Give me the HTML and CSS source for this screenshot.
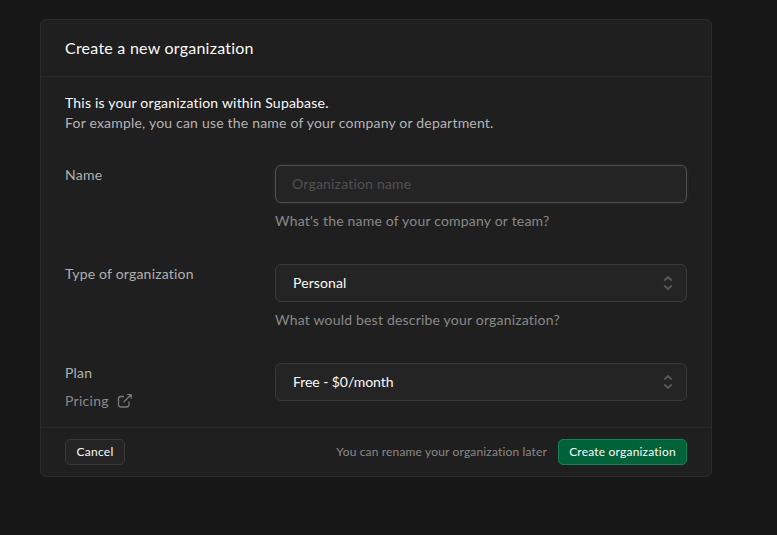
FILE: index.html
```html
<!DOCTYPE html>
<html lang="en"><head><meta charset="utf-8"><title>Create a new organization</title><link rel="stylesheet" href="styles.css"></head>
<body>
<main class="panel">
<header class="panel-header"><h1><span class="t t-title">Create a new organization</span></h1></header>
<section class="intro"><p class="lead"><span class="t t-lead">This is your organization within Supabase.</span></p><p class="sub"><span class="t t-sub">For example, you can use the name of your company or department.</span></p></section>
<section class="row"><div class="label"><span class="t t-name">Name</span></div><div class="field"><div class="control input"><span class="t t-ph">Organization name</span></div><p class="hint"><span class="t t-hint1">What's the name of your company or team?</span></p></div></section>
<section class="row"><div class="label"><span class="t t-type">Type of organization</span></div><div class="field"><div class="control select"><span class="t t-personal">Personal</span><svg class="chev" viewBox="0 0 18 18"><path d="M5.8 5.9 9 3 12.2 5.9M5.8 12.1 9 15 12.2 12.1"/></svg></div><p class="hint"><span class="t t-hint2">What would best describe your organization?</span></p></div></section>
<section class="row plan"><div class="label"><span class="t t-plan">Plan</span><a class="pricing"><span class="t t-pricing">Pricing</span><svg class="ext" viewBox="0 0 16 16"><path d="M6.5 3.5H3.8A2.3 2.3 0 0 0 1.5 5.8V11.7a2.3 2.3 0 0 0 2.3 2.3H9.7a2.3 2.3 0 0 0 2.3-2.3V9M10.7 1.6h3.5v3.5M14.2 1.6 7 8.8"/></svg></a></div><div class="field"><div class="control select"><span class="t t-free">Free - $0/month</span><svg class="chev" viewBox="0 0 18 18"><path d="M5.8 5.9 9 3 12.2 5.9M5.8 12.1 9 15 12.2 12.1"/></svg></div></div></section>
<footer class="panel-footer"><button class="btn cancel"><span class="t t-cancel">Cancel</span></button><span class="note"><span class="t t-note">You can rename your organization later</span></span><button class="btn create"><span class="t t-create">Create organization</span></button></footer>
</main>
</body></html>
```
FILE: styles.css
```css
* { box-sizing: border-box; }
body { margin: 0; padding: 19px 0 0 40px; height: 535px; background: #171717; color: #ededed; font: 14px/20px Lato, sans-serif; overflow: hidden; }
h1, p { margin: 0; font-weight: 400; }
.t { white-space: nowrap; letter-spacing: 0.2px; }
.t-title { letter-spacing: 0.24px; }
.t-name, .t-pricing, .t-cancel { letter-spacing: 0.28px; }
.t-personal { letter-spacing: 0.1px; }
.t-free { letter-spacing: -0.07px; }
.t-note { letter-spacing: 0.16px; }
.panel { width: 672px; height: 458px; border: 1px solid #2b2b2b; border-radius: 6px; background: #1f1f1f; display: flex; flex-direction: column; }
.panel-header { height: 57px; padding: 16px 24px; border-bottom: 1px solid #2b2b2b; }
h1 { font-size: 16px; line-height: 24px; color: #fafafa; }
.intro { height: 88px; padding: 16px 24px 0; }
.lead { color: #fafafa; }
.sub { color: #b4b4b4; }
.row { display: grid; grid-template-columns: 210px 412px; padding: 0 24px; height: 99px; flex: none; }
.label { color: #b0b0b0; }
.control { height: 38px; border: 1px solid #393939; border-radius: 6px; background: #242424; display: flex; align-items: center; padding: 0 9px 0 17px; }
.input { border-color: #505050; box-shadow: 0 0 0 2px #232323; padding-left: 16px; color: #505050; }
.select { justify-content: space-between; color: #fafafa; }
.hint { margin-top: 8px; color: #898989; }
svg { fill: none; stroke: #7c7c7c; stroke-linecap: round; stroke-linejoin: round; }
.chev { width: 18px; height: 18px; stroke: #555; stroke-width: 2; }
.plan { height: 64px; }
.pricing { display: flex; align-items: center; gap: 8px; margin-top: 8px; color: #898989; }
.ext { width: 16px; height: 16px; stroke-width: 1.3; }
.panel-footer { display: flex; align-items: center; height: 49px; border-top: 1px solid #2b2b2b; padding: 0 24px; }
.btn { height: 26px; font: 12px/16px Lato, sans-serif; color: #fafafa; border: 1px solid #393939; border-radius: 5px; background: #242424; padding: 0; }
.cancel { width: 60px; }
.note { margin-left: auto; font-size: 12px; color: #898989; }
.create { width: 129px; margin-left: 11px; background: #006239; border-color: #128252; }
```
